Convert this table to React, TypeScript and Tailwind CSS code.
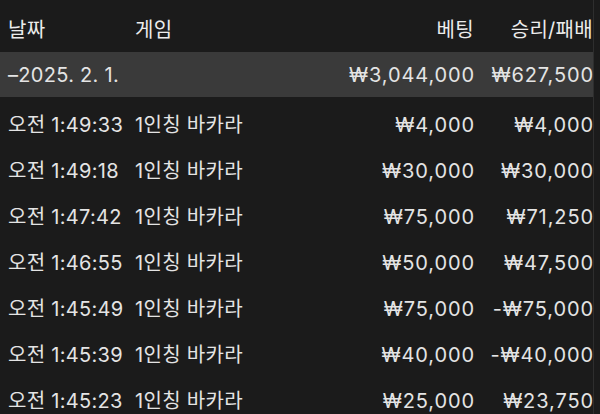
const rows = [
  { time: "오전 1:49:33", bet: "₩4,000", win: "₩4,000" },
  { time: "오전 1:49:18", bet: "₩30,000", win: "₩30,000" },
  { time: "오전 1:47:42", bet: "₩75,000", win: "₩71,250" },
  { time: "오전 1:46:55", bet: "₩50,000", win: "₩47,500" },
  { time: "오전 1:45:49", bet: "₩75,000", win: "-₩75,000" },
  { time: "오전 1:45:39", bet: "₩40,000", win: "-₩40,000" },
  { time: "오전 1:45:23", bet: "₩25,000", win: "₩23,750" },
];

const grid = "grid grid-cols-[127px_1fr_125px_119px] items-center pl-[8px]";
const amount = "text-right tracking-[0.9px] -mr-[1px]";

export default function App() {
  return (
    <div
      className="flex h-[414px] w-[600px] overflow-hidden bg-[#1b1b1b] text-[20px] tracking-[0.3px] text-[#e4e4e4]"
      style={{ fontFamily: 'Inter, "Noto Sans CJK KR", sans-serif' }}
    >
      <div className="w-[593px] shrink-0">
        <div className={`${grid} h-[52px] pt-[8px] text-[#ececec]`}>
          <span>날짜</span>
          <span>게임</span>
          <span className="text-right">베팅</span>
          <span className="text-right">승리/패배</span>
        </div>
        <div className={`${grid} h-[45px] bg-[#3a3a3a]`}>
          <span>–2025. 2. 1.</span>
          <span></span>
          <span className={amount}>₩3,044,000</span>
          <span className={amount}>₩627,500</span>
        </div>
        <div className="pt-[5px]">
          {rows.map((r) => (
            <div key={r.time} className={`${grid} h-[46px]`}>
              <span>{r.time}</span>
              <span>1인칭 바카라</span>
              <span className={amount}>{r.bet}</span>
              <span className={amount}>{r.win}</span>
            </div>
          ))}
        </div>
      </div>
      <div className="flex-1 border-l border-[#2e2e2e] bg-[#1b1b1b]" />
    </div>
  );
}
